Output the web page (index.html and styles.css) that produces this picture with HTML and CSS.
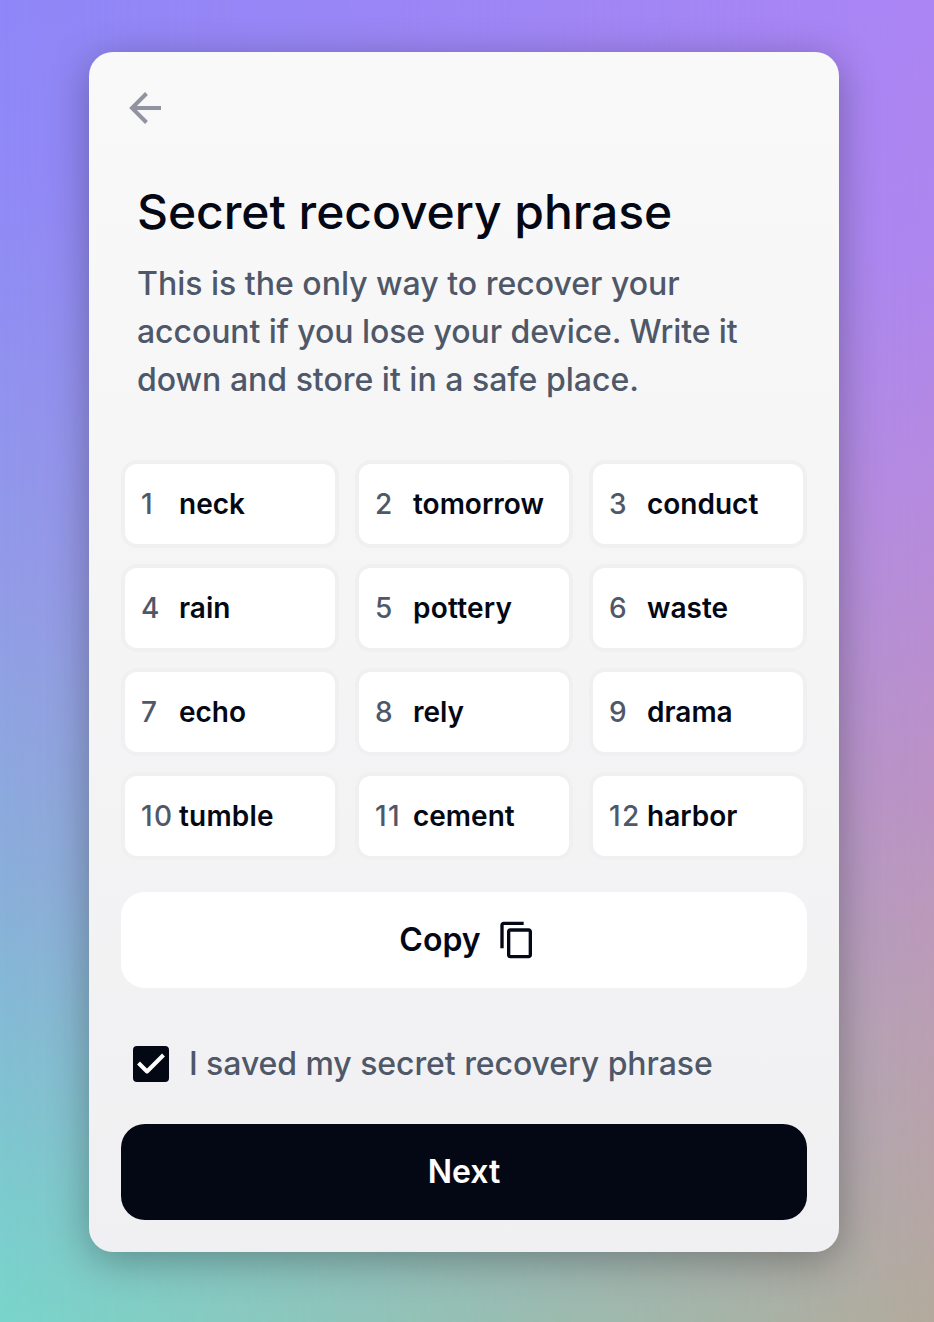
FILE: index.html
```html
<!DOCTYPE html>
<html lang="en">
<head>
<meta charset="utf-8">
<title>Secret recovery phrase</title>
<link rel="stylesheet" href="styles.css">
</head>
<body>
<main class="card">
  <button class="back" aria-label="Back">
    <svg width="32" height="32" viewBox="0 0 32 32" fill="none" stroke="currentColor" stroke-width="4"><path d="M32 16H4M17.500 1.500L3 16l14.500 14.500"/></svg>
  </button>
  <header class="intro">
    <h1 class="title">Secret recovery phrase</h1>
    <p class="lead">This is the only way to recover your<br><span class="tight">account if you lose your device. Write it</span><br>down and store it in a safe place.</p>
  </header>
  <ol class="words">
    <li class="word"><span class="num">1</span>neck</li>
    <li class="word"><span class="num">2</span>tomorrow</li>
    <li class="word"><span class="num">3</span>conduct</li>
    <li class="word"><span class="num">4</span>rain</li>
    <li class="word"><span class="num">5</span><span class="loose">pottery</span></li>
    <li class="word"><span class="num">6</span>waste</li>
    <li class="word"><span class="num">7</span>echo</li>
    <li class="word"><span class="num">8</span>rely</li>
    <li class="word"><span class="num">9</span>drama</li>
    <li class="word"><span class="num">10</span><span class="loose">tumble</span></li>
    <li class="word"><span class="num">11</span>cement</li>
    <li class="word"><span class="num">12</span>harbor</li>
  </ol>
  <button class="button copy"><span class="label">Copy</span>
    <svg width="40" height="40" viewBox="0 0 24 24" fill="currentColor"><path d="M16 1H4c-1.100 0-2 .9-2 2v14h2V3h12V1zm3 4H8c-1.100 0-2 .9-2 2v14c0 1.100.9 2 2 2h11c1.100 0 2-.9 2-2V7c0-1.100-.9-2-2-2zm0 16H8V7h11v14z"/></svg>
  </button>
  <div class="confirm">
    <span class="check" role="checkbox" aria-checked="true"><svg width="36" height="36" viewBox="0 0 36 36" fill="none" stroke="#fff" stroke-width="4" stroke-linejoin="round"><path d="M5.500 17l8.500 8.500L30.500 9"/></svg></span>
    <span class="label tight">I saved my secret recovery phrase</span>
  </div>
  <button class="button next"><span class="label">Next</span></button>
</main>
</body>
</html>
```
FILE: styles.css
```css
* { box-sizing: border-box; }
body {
  margin: 0;
  height: 1322px;
  padding: 52px 95px 0 89px;
  overflow: hidden;
  font-family: Inter, sans-serif;
  background: linear-gradient(172deg, #8f87f8 0%, #9089f7 14%, #919be7 46%, #8aafda 68%, #7dcbce 90%, #79d5cc 100%);
  background: linear-gradient(#8f87f8 0%, #9089f7 13%, #929be7 44%, #8aafda 67%, #7ccbce 90%, #79d5cc 100%);
  position: relative;
}
body::before {
  content: "";
  position: absolute;
  inset: 0;
  background: linear-gradient(#ab85f4 0%, #ae86ee 20%, #b68ade 38%, #bb92c4 60%, #ba9fb2 78%, #b3aa9c 100%);
  -webkit-mask-image: linear-gradient(to right, transparent, #000);
  mask-image: linear-gradient(to right, transparent, #000);
}
.card {
  position: relative;
  height: 1200px;
  padding: 36px 32px 32px;
  border-radius: 24px;
  background: linear-gradient(#f9f9f9, #f0f0f2);
  box-shadow: 0 8px 40px rgba(0, 0, 0, .3);
}
button { border: 0; padding: 0; font-family: inherit; }
.back { display: block; margin: 4px 0 0 8px; width: 32px; height: 32px; background: none; color: #9193a0; }
.back svg, .copy svg, .check svg { display: block; }
.intro { padding: 56px 16px 0; }
.title { margin: 0; font-size: 48px; line-height: 64px; font-weight: 500; color: #040815; letter-spacing: -.05px; white-space: nowrap; }
.lead { margin: 16px 0 0; font-size: 32px; line-height: 48px; font-weight: 500; color: #4f5869; white-space: nowrap; }
.tight { letter-spacing: -.07px; }
.loose { letter-spacing: .2px; }
.words { list-style: none; margin: 60px 4px 0; padding: 0; display: grid; grid-template-columns: repeat(3, 210px); gap: 24px; }
.word { height: 80px; display: flex; align-items: center; padding-left: 16px; border-radius: 12px; background: #fff; font-size: 28px; font-weight: 600; color: #040815; box-shadow: 0 0 0 4px #f0f0f2; }
.num { width: 38px; font-weight: 450; color: #4f5869; letter-spacing: 1.5px; }
.button { display: flex; align-items: center; justify-content: center; width: 100%; height: 96px; border-radius: 24px; font-size: 32px; font-weight: 600; }
.label { padding-bottom: 2px; }
.copy { gap: 16px; margin-top: 36px; padding-left: 8px; background: #fff; color: #040815; }
.confirm { display: flex; align-items: center; gap: 20px; height: 48px; margin: 52px 0 36px 12px; font-size: 32px; font-weight: 500; color: #4f5869; white-space: nowrap; }
.check { width: 36px; height: 36px; border-radius: 4px; background: #040815; }
.next { margin-top: 36px; background: #040815; color: #fff; }
```
